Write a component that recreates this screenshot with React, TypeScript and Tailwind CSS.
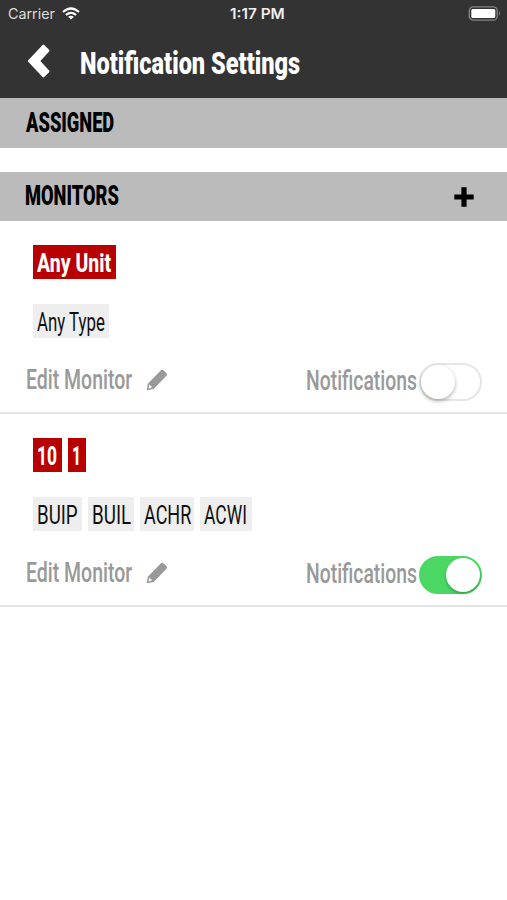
import { useLayoutEffect, useRef, useState } from 'react'

type FitProps = {
    text: string
    className: string
}

// Squeezes a label horizontally so it fills the width of its box
const Fit = ({ text, className }: FitProps) => {
    const box = useRef<HTMLSpanElement>(null)
    const label = useRef<HTMLSpanElement>(null)
    const [scale, setScale] = useState<number>(1)

    useLayoutEffect(() => {
        if (box.current && label.current) {
            setScale(box.current.clientWidth / label.current.offsetWidth)
        }
    }, [text])

    return (
        <span ref={box} className={`block shrink-0 whitespace-nowrap ${className}`}>
            <span ref={label} className="inline-block origin-left" style={{ transform: `scaleX(${scale})` }}>{text}</span>
        </span>
    )
}

type Chip = {
    text: string
    box: string
    width: string
}

type MonitorProps = {
    units: Chip[]
    types: Chip[]
    enabled: boolean
}

const Toggle = ({ enabled }: { enabled: boolean }) => {
    const [on, setOn] = useState<boolean>(enabled)

    return (
        <button
            role="switch"
            aria-checked={on}
            aria-label="Notifications"
            onClick={() => setOn(!on)}
            className={`flex h-[38px] w-[63px] shrink-0 items-center rounded-full border-2 ${on ? "justify-end border-[#4bd763] bg-[#4bd763]" : "justify-start border-[#e6e6e6] bg-white"}`}
        >
            <span className={`size-[34px] rounded-full bg-white ${on ? "shadow-[0_2px_3px_rgba(0,0,0,0.25)]" : "shadow-[0_2px_4px_rgba(0,0,0,0.3)]"}`} />
        </button>
    )
}

const Pencil = () => (
    <svg viewBox="0 0 22 22" className="ml-[14px] size-[22px]" fill="#999">
        <path fillRule="evenodd" d="M.8 21.2L1.8 14.8L14.7 1.6Q16.2.1 17.7 1.6L20.5 4.2Q21.8 5.5 20.5 6.8L7.6 20ZM2.6 19.4L5.7 18.6L5.6 17.2L4.3 16.9L4 15.8L3.2 16.1Z" />
    </svg>
)

const Monitor = ({ units, types, enabled }: MonitorProps) => (
    <li className="h-[193px] border-b-2 border-[#e4e4e4] pt-6">
        <div className="flex gap-1.5 pl-[33px]">
            {units.map(unit => (
                <div key={unit.text} className={`h-[34px] bg-[#b90000] pl-1 text-[26px] leading-[36px] font-extrabold text-white ${unit.box}`}>
                    <Fit text={unit.text} className={unit.width} />
                </div>
            ))}
        </div>
        <div className="mt-[25px] flex gap-1.5 pl-[33px]">
            {types.map(type => (
                <div key={type.text} className={`h-[34px] bg-[#eee] pl-[3.5px] text-[26px] leading-[36px] text-[#111] ${type.box}`}>
                    <Fit text={type.text} className={type.width} />
                </div>
            ))}
        </div>
        <div className="mt-6 flex h-[39px] items-center justify-between pr-[25px] pl-[26px] text-[27px] leading-[38px] font-medium text-[#999]">
            <button className="-mt-[4px] flex items-center">
                <Fit text="Edit Monitor" className="w-[106px] text-left" />
                <Pencil />
            </button>
            <div className="flex items-center">
                <Fit text="Notifications" className="-mt-px mr-[2px] w-[111px]" />
                <Toggle enabled={enabled} />
            </div>
        </div>
    </li>
)

const App = () => {
    return (
        <div className="h-[900px] w-[507px] overflow-hidden bg-white font-['Roboto',sans-serif]">
            <header className="h-[98px] bg-[#333] text-white">
                {/* Status bar */}
                <div className="grid h-[27px] grid-cols-3 items-center pr-[6px] pl-2 font-['Inter',sans-serif] text-[14px] leading-[27px]">
                    <div className="flex items-center gap-[7px] text-[#ddd]">
                        <Fit text="Carrier" className="w-[47px]" />
                        <svg viewBox="0 0 18 13" className="-mt-px h-[13px] w-[18px]" fill="none" stroke="#fff" strokeWidth="2.2">
                            <path d="M1 5Q9-2 17 5" />
                            <path d="M3.9 8Q9 3.7 14.1 8" />
                            <path d="M9 12.5L6.1 9.7Q9 7.6 11.9 9.7Z" fill="#fff" stroke="none" />
                        </svg>
                    </div>
                    <div className="flex justify-center pl-1.5">
                        <Fit text="1:17 PM" className="w-[55px] font-semibold text-[#eee]" />
                    </div>
                    <svg viewBox="0 0 33 15" className="h-[15px] w-[33px] justify-self-end">
                        <rect x="1.3" y=".8" width="27.9" height="13.4" rx="4" fill="none" stroke="#858585" strokeWidth="1.3" />
                        <rect x="3.3" y="3" width="24" height="9" rx="1.5" fill="#fff" />
                        <path d="M31 5Q33 7.5 31 10Z" fill="#858585" />
                    </svg>
                </div>
                <div className="flex h-[71px] items-center pl-[27px]">
                    <button aria-label="Back">
                        <svg viewBox="0 0 23 34" className="-mt-[3px] h-[34px] w-[23px]" fill="#fff">
                            <path d="M1.2 16.2L15.6 .9Q16.4.2 17.2.9L22.1 5.8Q22.9 6.6 22.1 7.4L13.4 17L22.1 26.6Q22.9 27.4 22.1 28.2L17.2 33.1Q16.4 33.8 15.6 33.1L1.2 17.8Q.5 17 1.2 16.2Z" />
                        </svg>
                    </button>
                    <h1 className="ml-[30px] text-[32px] leading-[72px] font-black">
                        <Fit text="Notification Settings" className="w-[220px]" />
                    </h1>
                </div>
            </header>

            <h2 className="h-[50px] bg-[#bbb] pl-[26px] text-[27px] leading-[50px] font-black text-black">
                <Fit text="ASSIGNED" className="w-[88px]" />
            </h2>

            <div className="mt-6 flex h-[49px] items-center justify-between bg-[#bbb] pr-[33px] pl-[25px]">
                <h2 className="text-[27px] leading-[49px] font-black text-black">
                    <Fit text="MONITORS" className="w-[94px]" />
                </h2>
                <button aria-label="Add monitor">
                    <svg viewBox="0 0 20 20" className="size-5">
                        <path d="M10 .3V19.7M.3 10H19.7" stroke="#000" strokeWidth="5.2" />
                    </svg>
                </button>
            </div>

            <ul>
                <Monitor
                    units={[{ text: "Any Unit", box: "w-[83px]", width: "w-[74px]" }]}
                    types={[{ text: "Any Type", box: "w-[76px]", width: "w-[68px]" }]}
                    enabled={false}
                />
                <Monitor
                    units={[
                        { text: "10", box: "w-[29px]", width: "w-[20px]" },
                        { text: "1", box: "w-[18px]", width: "w-[9px]" },
                    ]}
                    types={[
                        { text: "BUIP", box: "w-[49px]", width: "w-[41px]" },
                        { text: "BUIL", box: "w-[46px]", width: "w-[39px]" },
                        { text: "ACHR", box: "w-[54px]", width: "w-[47px]" },
                        { text: "ACWI", box: "w-[52px]", width: "w-[43px]" },
                    ]}
                    enabled={true}
                />
            </ul>
        </div>
    )
}

export default App
